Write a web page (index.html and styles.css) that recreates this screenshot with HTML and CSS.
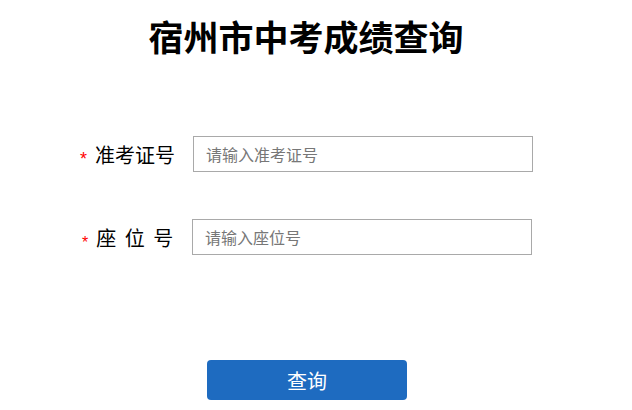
FILE: index.html
```html
<!DOCTYPE html>
<html lang="zh-CN">
  <head>
    <meta charset="UTF-8" />
    <meta name="viewport" content="width=device-width, initial-scale=1.0" />
    <title>宿州市中考成绩查询</title>
    <link rel="stylesheet" href="styles.css">
  </head>
  <body>
    <div class="page">
      <h1 class="title">宿州市中考成绩查询</h1>

      <form class="query-form" onsubmit="return false;">
        <div class="row">
          <label for="zkzh" class="label"><span class="star">*</span>准考证号</label>
          <input type="text" id="zkzh" class="field" placeholder="请输入准考证号">
        </div>
        <div class="row">
          <label for="zwh" class="label label-seat"><span class="star star-small">*</span><span class="spaced">座 位 号</span></label>
          <input type="text" id="zwh" class="field" placeholder="请输入座位号">
        </div>
        <div class="actions">
          <button type="submit" class="btn">查询</button>
        </div>
      </form>
    </div>
  </body>
</html>
```

FILE: styles.css
```css
body {
  margin: 0;
  padding: 0;
  background: #fff;
  color: #000;
  font-family: "Noto Sans CJK SC", "Noto Sans", sans-serif;
}

.page {
  width: 612px;
}

.title {
  margin: 14px 0 0 0;
  font-size: 35px;
  font-weight: 700;
  line-height: 44px;
  text-align: center;
}

.query-form {
  margin-top: 78px;
}

.row {
  display: flex;
  align-items: center;
  padding-left: 80px;
  margin-bottom: 47px;
}

.label {
  width: 113px;
  font-size: 20px;
  color: #000;
  white-space: nowrap;
}

.label-seat {
  width: 110px;
  padding-left: 2px;
}

.spaced {
  letter-spacing: 2px;
}

.star {
  display: inline-block;
  color: #f00;
  font-family: "Liberation Sans", sans-serif;
  font-size: 18px;
  margin-right: 8px;
  transform: translateY(2px);
}

.star-small {
  font-size: 16px;
}

.field {
  box-sizing: border-box;
  width: 340px;
  height: 36px;
  padding: 0 12px;
  border: 1px solid #a9a9a9;
  border-radius: 0;
  font-family: "Noto Sans CJK SC", sans-serif;
  font-size: 16px;
  outline: none;
}

.field::placeholder {
  color: #777;
}

.actions {
  padding-left: 207px;
  margin-top: 105px;
}

.btn {
  width: 200px;
  height: 40px;
  border: none;
  border-radius: 4px;
  background: #1e6bc0;
  color: #fff;
  font-family: "Noto Sans CJK SC", sans-serif;
  font-size: 20px;
  cursor: pointer;
}
```
